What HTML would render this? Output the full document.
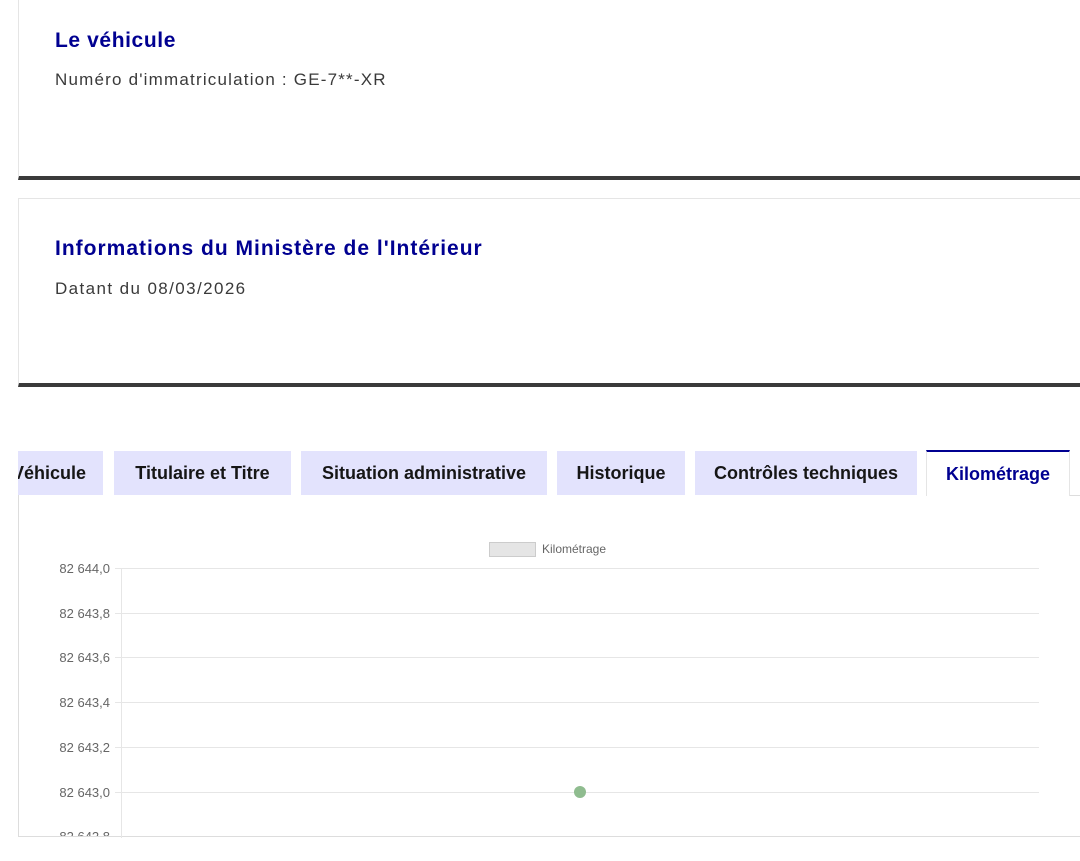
<!DOCTYPE html>
<html><head><meta charset="utf-8"><style>
*{margin:0;padding:0;box-sizing:border-box}
body{width:1080px;height:861px;background:#fff;overflow:hidden;position:relative;font-family:"Liberation Sans",sans-serif}
.card{position:absolute;left:18px;width:1080px;border:1px solid #e5e5e5;border-bottom:4px solid #3a3a3a;background:#fff}
.card h2{position:absolute;left:36px;font-size:21px;font-weight:bold;color:#000091;letter-spacing:1px}
.card p{position:absolute;left:36px;font-size:17px;color:#3a3a3a;letter-spacing:1.2px}
.tab{position:absolute;top:451px;height:44px;background:#e3e3fd;color:#161616;font-weight:bold;font-size:18px;line-height:44px;text-align:center;white-space:nowrap;overflow:hidden}
.yl{position:absolute;right:970px;font-size:13px;color:#666;text-align:right}
.g{position:absolute;left:115px;width:924px;height:1px;background:#e6e6e6}
</style></head><body>
<div class="card" style="top:-2px;height:182px"><h2 style="top:30px;letter-spacing:0.6px">Le véhicule</h2><p style="top:71px">Numéro d'immatriculation : GE-7**-XR</p></div>
<div class="card" style="top:198px;height:189px"><h2 style="top:38px">Informations du Ministère de l'Intérieur</h2><p style="top:80px;letter-spacing:1.4px">Datant du 08/03/2026</p></div>

<div class="tab" style="left:18px;width:85px;text-align:right;padding-right:17px;direction:rtl"><span style="direction:ltr;unicode-bidi:bidi-override">Véhicule</span></div>
<div class="tab" style="left:114px;width:177px">Titulaire et Titre</div>
<div class="tab" style="left:301px;width:246px">Situation administrative</div>
<div class="tab" style="left:557px;width:128px">Historique</div>
<div class="tab" style="left:695px;width:222px">Contrôles techniques</div>
<div class="tab" style="left:926px;top:450px;height:46px;width:144px;background:#fff;border-top:2px solid #000091;border-left:1px solid #e5e5e5;border-right:1px solid #e5e5e5;color:#000091">Kilométrage</div>

<div style="position:absolute;left:18px;top:495px;width:1070px;height:342px;border-left:1px solid #ddd;border-bottom:1px solid #ddd"></div>
<div style="position:absolute;left:1070px;top:495px;width:20px;height:1px;background:#ddd"></div>

<div style="position:absolute;left:489px;top:542px;width:47px;height:15px;background:#e5e5e5;border:1px solid #ccc"></div>
<div style="position:absolute;left:542px;top:542px;font-size:12px;color:#666">Kilométrage</div>

<div style="position:absolute;left:121px;top:568px;width:1px;height:270px;background:#e6e6e6"></div>
<div class="g" style="top:568px"></div><div class="yl" style="top:561px">82 644,0</div>
<div class="g" style="top:613px"></div><div class="yl" style="top:606px">82 643,8</div>
<div class="g" style="top:657px"></div><div class="yl" style="top:650px">82 643,6</div>
<div class="g" style="top:702px"></div><div class="yl" style="top:695px">82 643,4</div>
<div class="g" style="top:747px"></div><div class="yl" style="top:740px">82 643,2</div>
<div class="g" style="top:792px"></div><div class="yl" style="top:785px">82 643,0</div>
<div style="position:absolute;left:0;top:830px;width:120px;height:6px;overflow:hidden"><div class="yl" style="top:-1px;right:10px">82 642,8</div></div>
<div style="position:absolute;left:574px;top:786px;width:12px;height:12px;border-radius:50%;background:#8fbc8f"></div>
</body></html>
